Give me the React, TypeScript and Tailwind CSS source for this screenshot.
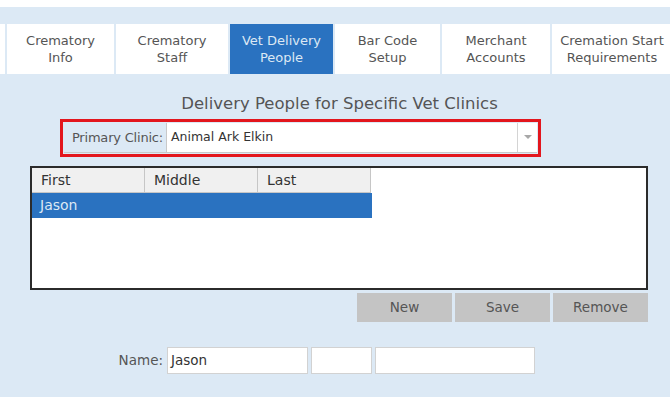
const tabs = [
  { label: '', w: 'w-[5px]' },
  { label: 'Crematory\nInfo', w: 'w-[107px]' },
  { label: 'Crematory\nStaff', w: 'w-[112px]' },
  { label: 'Vet Delivery\nPeople', w: 'w-[103px]', active: true },
  { label: 'Bar Code\nSetup', w: 'w-[105px]' },
  { label: 'Merchant\nAccounts', w: 'w-[108px]' },
  { label: 'Cremation Start\nRequirements', w: 'w-[120px]' },
]

export default function App() {
  return (
    <div className="w-[670px] h-[397px] overflow-hidden bg-[#dce9f5] text-[#555] font-['DejaVu_Sans',Verdana,sans-serif]">
      <div className="h-[7px] bg-white" />

      <div className="mt-[17px] flex gap-[2px] h-[50px] shrink-0">
        {tabs.map((t, i) => (
          <div
            key={i}
            className={`${t.w} shrink-0 flex items-center justify-center text-center whitespace-pre-line text-[13px] leading-[17px] ${
              t.active ? 'bg-[#2a72c0] text-[#dce8f4]' : 'bg-white text-[#555]'
            }`}
          >
            {t.label}
          </div>
        ))}
      </div>

      <div className="mt-[20px] pl-[9px] text-center text-[16.5px] leading-[20px] text-[#555]">
        Delivery People for Specific Vet Clinics
      </div>

      <div className="mt-[5px] ml-[60px] w-[481px] h-[38px] border-[3px] border-[#e3161d] p-[1px] flex">
        <div className="w-[102px] flex items-center justify-end pr-[3px] text-[13px] tracking-[-0.2px] border-b border-[#c9c9c9]">
          Primary Clinic:
        </div>
        <div className="flex-1 flex bg-white border-l border-b border-[#c9c9c9]">
          <div className="flex-1 flex items-center pl-[4px] text-[12.5px] text-[#333]">Animal Ark Elkin</div>
          <div className="w-[20px] border-l border-[#d4d4d4] flex items-center justify-center">
            <svg width="8" height="5" viewBox="0 0 8 5">
              <path d="M0 0 L8 0 L4 4 Z" fill="#a8a8a8" />
            </svg>
          </div>
        </div>
      </div>

      <div className="mt-[9px] ml-[30px] w-[618px] h-[124px] border-2 border-[#2b2b2b] bg-white">
        <div className="flex h-[25px]">
          {['First', 'Middle', 'Last'].map((h) => (
            <div
              key={h}
              className="w-[113px] bg-[#f0f0f0] border-r border-b border-[#c6c6c6] flex items-center pl-[9px] text-[14px] text-[#333]"
            >
              {h}
            </div>
          ))}
        </div>
        <div className="w-[340px] h-[25px] bg-[#2a72c0] flex items-center pl-[8px] text-[14px] text-[#dce8f4]">
          Jason
        </div>
      </div>

      <div className="mt-[3px] flex justify-end gap-[3px] pr-[22px]">
        {['New', 'Save', 'Remove'].map((b) => (
          <div
            key={b}
            className="w-[95px] h-[29px] bg-[#c4c4c4] flex items-center justify-center text-[13.5px] text-[#555]"
          >
            {b}
          </div>
        ))}
      </div>

      <div className="mt-[25px] flex items-center">
        <div className="w-[167px] pr-[4px] text-right text-[13.5px]">Name:</div>
        <div className="flex gap-[3px]">
          <div className="w-[141px] h-[27px] bg-white border border-[#d2d2d2] flex items-center pl-[3px] text-[13.5px] text-[#333]">
            Jason
          </div>
          <div className="w-[61px] h-[27px] bg-white border border-[#d2d2d2]" />
          <div className="w-[160px] h-[27px] bg-white border border-[#d2d2d2]" />
        </div>
      </div>
    </div>
  )
}
